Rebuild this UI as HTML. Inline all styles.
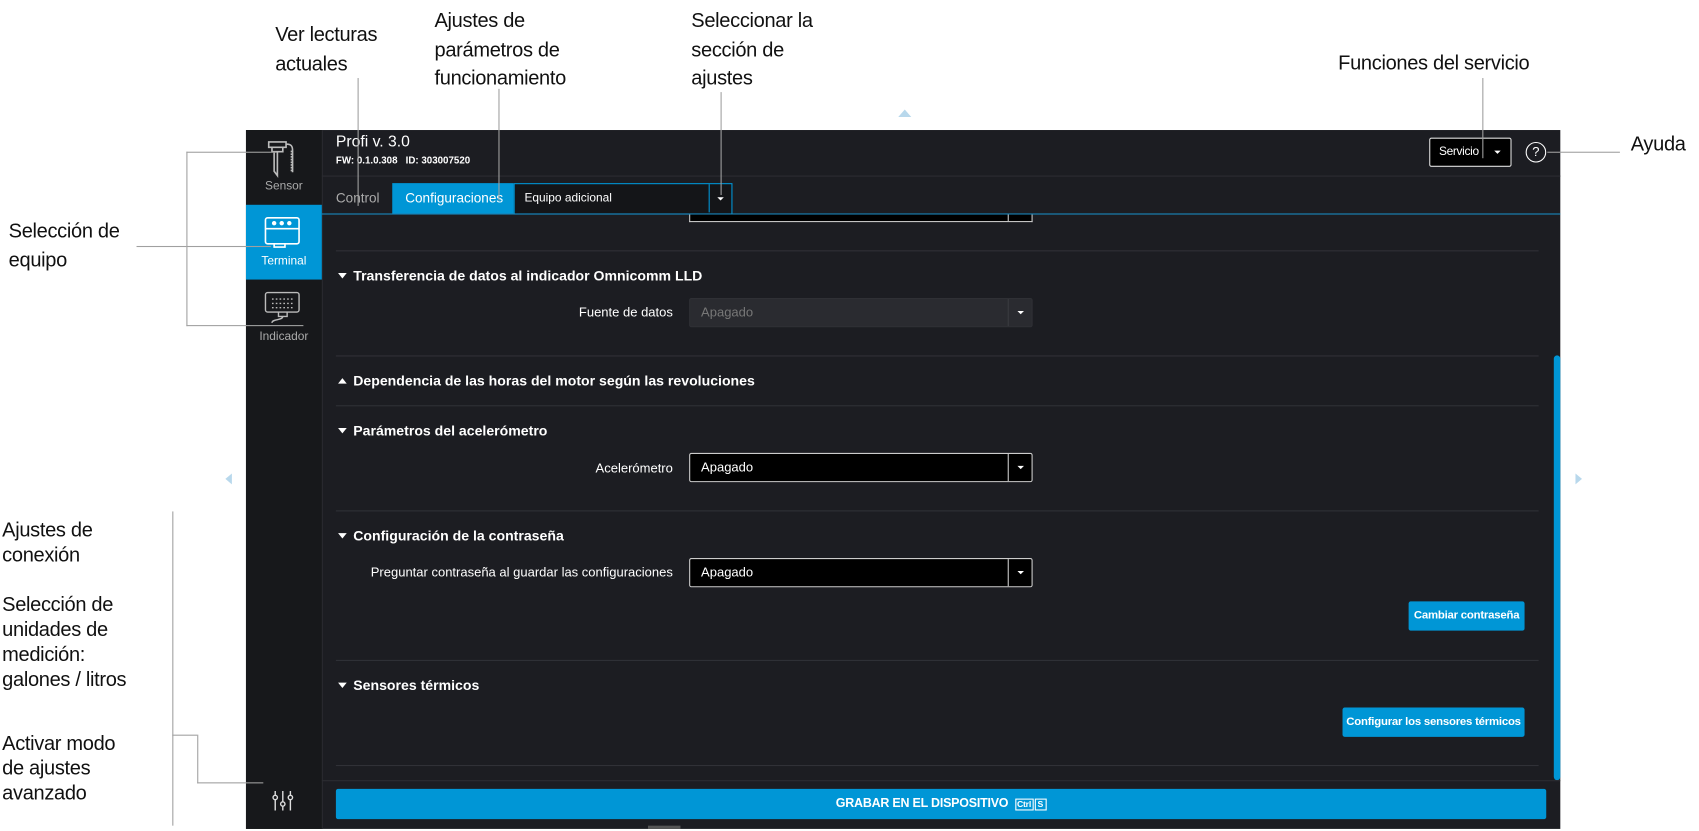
<!DOCTYPE html>
<html><head><meta charset="utf-8"><style>
html,body{margin:0;padding:0;background:#fff;width:1699px;height:831px;overflow:hidden}
#w{position:absolute;left:0;top:0;width:1568px;height:767px;transform:scale(1.08355);transform-origin:0 0;font-family:"Liberation Sans",sans-serif}
.a{position:absolute}
.ann{position:absolute;font-size:18.5px;line-height:26.5px;color:#111;font-family:"Liberation Sans",sans-serif;letter-spacing:-0.3px}
.ln{position:absolute;background:#a0a0a0}
.app{position:absolute;left:227px;top:120px;width:1213px;height:645px;background:#1c1d22}
.sb{position:absolute;left:227px;top:120px;width:70px;height:645px;background:#17181b;border-right:1px solid #2a2b30}
.t{position:absolute;color:#fff;white-space:nowrap}
.sep{position:absolute;left:310px;width:1110px;height:1px;background:#303137}
.h{position:absolute;left:312px;color:#fff;font-size:13px;font-weight:bold;white-space:nowrap}
.h:before{content:"";display:inline-block;border-left:4px solid transparent;border-right:4px solid transparent;border-top:5px solid #fff;margin-right:6px;vertical-align:2px}
.hu:before{border-top:none;border-bottom:5px solid #fff}
.lbl{position:absolute;right:947px;color:#fff;font-size:12px;white-space:nowrap}
.sel{position:absolute;left:636px;width:315px;height:25px;background:#000;border:1px solid #ccc;border-radius:2px;color:#fff;font-size:12px;line-height:25px}
.sel span{position:absolute;left:10px}
.sel i{position:absolute;right:0;top:0;width:21px;height:25px;border-left:1px solid #ccc}
.sel i:after{content:"";position:absolute;left:8px;top:11px;border-left:3px solid transparent;border-right:3px solid transparent;border-top:3px solid #fff}
.btn{position:absolute;background:#0096d6;color:#fff;font-size:10.5px;font-weight:bold;text-align:center;border-radius:2px;white-space:nowrap;letter-spacing:-0.2px}
.tri{position:absolute;width:0;height:0}
</style></head><body><div id="w">

<div class="ann" style="left:254px;top:19px">Ver lecturas<br>actuales</div>
<div class="ann" style="left:401px;top:6px">Ajustes de<br>parámetros de<br>funcionamiento</div>
<div class="ann" style="left:638px;top:6px">Seleccionar la<br>sección de<br>ajustes</div>
<div class="ann" style="left:1235px;top:45px">Funciones del servicio</div>
<div class="ann" style="left:1505px;top:120px">Ayuda</div>
<div class="ann" style="left:8px;top:200px">Selección de<br>equipo</div>
<div class="ann" style="left:2px;top:477px;line-height:23px">Ajustes de<br>conexión</div>
<div class="ann" style="left:2px;top:546px;line-height:23px">Selección de<br>unidades de<br>medición:<br>galones / litros</div>
<div class="ann" style="left:2px;top:674px;line-height:23px">Activar modo<br>de ajustes<br>avanzado</div>

<div class="tri" style="left:829px;top:101px;border-left:6px solid transparent;border-right:6px solid transparent;border-bottom:7px solid #b8d8ec"></div>
<div class="tri" style="left:208px;top:437px;border-top:5px solid transparent;border-bottom:5px solid transparent;border-right:6px solid #b8d8ec"></div>
<div class="tri" style="left:1454px;top:437px;border-top:5px solid transparent;border-bottom:5px solid transparent;border-left:6px solid #b8d8ec"></div>

<div class="app"></div>
<div class="sb"></div>
<svg class="a" style="left:240px;top:127px" width="44" height="40" viewBox="0 0 44 40" fill="none" stroke="#bbb" stroke-width="1.5">
<path d="M8 4h16v5H8z M11 9v4h10v-4 M13 13v18l3 4v-22 M24 6c5 0 6 2 6 6v20"/><path d="M29 12v20" stroke-dasharray="1.5 1"/>
</svg>
<div class="t" style="left:227px;top:166px;width:70px;text-align:center;color:#aaa;font-size:11px">Sensor</div>
<div class="a" style="left:227px;top:189px;width:70px;height:69px;background:#0096d6"></div>
<svg class="a" style="left:243px;top:199px" width="36" height="32" viewBox="0 0 36 32" fill="none" stroke="#fff" stroke-width="1.5">
<rect x="2" y="2" width="31" height="24" rx="2"/><path d="M2 12h31"/><circle cx="10" cy="7" r="1.3" fill="#fff"/><circle cx="17" cy="7" r="1.3" fill="#fff"/><circle cx="24" cy="7" r="1.3" fill="#fff"/><path d="M10 26v3h10v-3"/>
</svg>
<div class="t" style="left:227px;top:235px;width:70px;text-align:center;font-size:11px">Terminal</div>
<svg class="a" style="left:243px;top:268px" width="36" height="36" viewBox="0 0 36 36" fill="none" stroke="#bbb" stroke-width="1.3">
<rect x="2" y="2" width="31" height="18" rx="2"/><path d="M8 8h20M8 12h20M8 16h20" stroke-dasharray="1.5 2"/><path d="M14 20v4h8v-4 M18 24c0 4-10 2-10 6"/>
</svg>
<div class="t" style="left:227px;top:305px;width:70px;text-align:center;color:#aaa;font-size:11px">Indicador</div>
<svg class="a" style="left:249px;top:728px" width="24" height="22" viewBox="0 0 24 22" fill="none" stroke="#ddd" stroke-width="1.3">
<path d="M5 2v4M5 10v10M12 2v10M12 16v4M19 2v4M19 10v10"/><circle cx="5" cy="8" r="2"/><circle cx="12" cy="14" r="2"/><circle cx="19" cy="8" r="2"/>
</svg>

<div class="t" style="left:310px;top:123px;font-size:14.5px">Profi v. 3.0</div>
<div class="t" style="left:310px;top:143px;font-size:9px;font-weight:bold">FW: 0.1.0.308 &nbsp; ID: 303007520</div>
<div class="a" style="left:297px;top:162px;width:1143px;height:1px;background:#2c2d32"></div>
<div class="a" style="left:1319px;top:127px;width:74px;height:25px;background:#000;border:1px solid #ddd;border-radius:2px"></div>
<div class="t" style="left:1328px;top:134px;font-size:11px;letter-spacing:-0.3px">Servicio</div>
<div class="tri" style="left:1379px;top:139px;border-left:3px solid transparent;border-right:3px solid transparent;border-top:3px solid #fff"></div>
<div class="a" style="left:1408px;top:131px;width:17px;height:17px;border:1.5px solid #fff;border-radius:50%;color:#fff;font-size:12px;text-align:center;line-height:17px">?</div>

<div class="t" style="left:310px;top:176px;font-size:12.5px;color:#aaa">Control</div>
<div class="a" style="left:362px;top:169px;width:112px;height:28px;background:#0096d6"></div>
<div class="t" style="left:374px;top:176px;font-size:12.5px">Configuraciones</div>
<div class="a" style="left:474px;top:169px;width:200px;height:27px;border:1px solid #0096d6;background:#141518"></div>
<div class="t" style="left:484px;top:177px;font-size:11px">Equipo adicional</div>
<div class="a" style="left:654px;top:170px;width:1px;height:26px;background:#0096d6"></div>
<div class="tri" style="left:662px;top:182px;border-left:3px solid transparent;border-right:3px solid transparent;border-top:3px solid #fff"></div>
<div class="a" style="left:297px;top:197px;width:1143px;height:1px;background:#1a8ac0"></div>

<div class="a" style="left:636px;top:198px;width:315px;height:6px;border:1px solid #ccc;border-top:none;background:#000"></div>
<div class="a" style="left:930px;top:198px;width:1px;height:6px;background:#ccc"></div>
<div class="sep" style="top:231px"></div>
<div class="h" style="top:247px">Transferencia de datos al indicador Omnicomm LLD</div>
<div class="lbl" style="top:281px">Fuente de datos</div>
<div class="sel" style="top:275px;background:#2a2b30;border-color:#2f3035;color:#777"><span>Apagado</span><i style="border-color:#3a3b40"></i></div>
<div class="sep" style="top:328px"></div>
<div class="h hu" style="top:344px">Dependencia de las horas del motor según las revoluciones</div>
<div class="sep" style="top:374px"></div>
<div class="h" style="top:390px">Parámetros del acelerómetro</div>
<div class="lbl" style="top:425px">Acelerómetro</div>
<div class="sel" style="top:418px"><span>Apagado</span><i></i></div>
<div class="sep" style="top:471px"></div>
<div class="h" style="top:487px">Configuración de la contraseña</div>
<div class="lbl" style="top:521px">Preguntar contraseña al guardar las configuraciones</div>
<div class="sel" style="top:515px"><span>Apagado</span><i></i></div>
<div class="btn" style="left:1300px;top:555px;width:107px;height:27px;line-height:27px">Cambiar contraseña</div>
<div class="sep" style="top:609px"></div>
<div class="h" style="top:625px">Sensores térmicos</div>
<div class="btn" style="left:1239px;top:653px;width:168px;height:27px;line-height:27px">Configurar los sensores térmicos</div>
<div class="sep" style="top:706px"></div>
<div class="a" style="left:1434px;top:328px;width:6px;height:392px;background:#0096d6;border-radius:3px"></div>
<div class="a" style="left:297px;top:720px;width:1143px;height:1px;background:#2c2d32"></div>
<div class="btn" style="left:310px;top:728px;width:1117px;height:28px;line-height:28px;font-size:11.5px">GRABAR EN EL DISPOSITIVO <span style="border:1px solid #fff;font-size:8px;padding:0 1px;margin-left:3px">Ctrl</span><span style="border:1px solid #fff;font-size:8px;padding:0 2px;margin-left:1px">S</span></div>
<div class="a" style="left:598px;top:762px;width:30px;height:3px;background:#555"></div>

<div class="ln" style="left:330px;top:72px;width:1px;height:118px"></div>
<div class="ln" style="left:460px;top:82px;width:1px;height:103px"></div>
<div class="ln" style="left:665px;top:85px;width:1px;height:95px"></div>
<div class="ln" style="left:1368px;top:72px;width:1px;height:74px"></div>
<div class="ln" style="left:1428px;top:140px;width:67px;height:1px"></div>
<div class="ln" style="left:126px;top:227px;width:46px;height:1px"></div>
<div class="ln" style="left:172px;top:140px;width:1px;height:161px"></div>
<div class="ln" style="left:172px;top:140px;width:83px;height:1px"></div>
<div class="ln" style="left:172px;top:227px;width:78px;height:1px"></div>
<div class="ln" style="left:172px;top:300px;width:108px;height:1px"></div>
<div class="ln" style="left:159px;top:472px;width:1px;height:290px"></div>
<div class="ln" style="left:159px;top:678px;width:23px;height:1px"></div>
<div class="ln" style="left:182px;top:678px;width:1px;height:45px"></div>
<div class="ln" style="left:182px;top:722px;width:61px;height:1px"></div>
</div></body></html>
